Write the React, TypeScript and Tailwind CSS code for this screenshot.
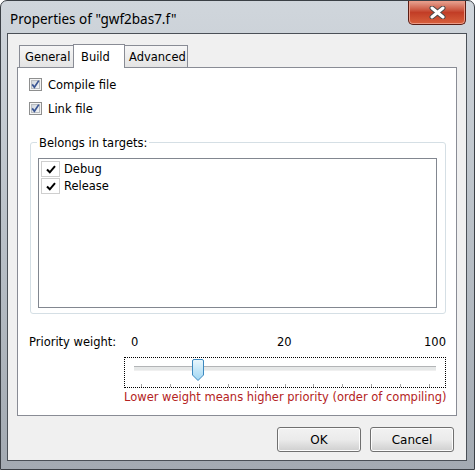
import React from "react";

const ui = { fontFamily: '"DejaVu Sans", Verdana, sans-serif' };
const title = { fontFamily: '"Noto Sans", "Open Sans", sans-serif' };

function CheckBox() {
  return (
    <svg width="13" height="13" viewBox="0 0 13 13" className="shrink-0">
      <defs>
        <linearGradient id="cbg" x1="0" y1="0" x2="1" y2="1">
          <stop offset="0" stopColor="#cdd3da" />
          <stop offset="1" stopColor="#f7f8f9" />
        </linearGradient>
      </defs>
      <rect x="0.5" y="0.5" width="12" height="12" fill="#f4f4f4" stroke="#8e8f8f" />
      <rect x="2.5" y="2.5" width="8" height="8" fill="url(#cbg)" stroke="#b9bdc2" />
      <path d="M3.2 6.4 L5.4 9.2 L9.8 2.6" fill="none" stroke="#3a5593" strokeWidth="1.7" />
    </svg>
  );
}

function ListCheck() {
  return (
    <div className="w-[19px] h-[16px] border border-[#cfcfcf] bg-white flex items-center justify-center shrink-0">
      <svg width="10" height="9" viewBox="0 0 10 9">
        <path d="M1 4.5 L3.8 7.3 L9 1.2" fill="none" stroke="#000" strokeWidth="2" />
      </svg>
    </div>
  );
}

function Slider() {
  const ticks = [16, 45, 74, 103, 132, 160, 188, 217, 246, 275, 304];
  return (
    <div className="w-[322px] h-[31px] border border-dotted border-black">
      <svg width="320" height="29" viewBox="0 0 320 29">
        <defs>
          <linearGradient id="thumb" x1="0" y1="0" x2="0" y2="1">
            <stop offset="0" stopColor="#eaf7fd" />
            <stop offset="1" stopColor="#9fd6f3" />
          </linearGradient>
        </defs>
        <rect x="9" y="8" width="302" height="5" fill="#e6e8e8" />
        <rect x="9" y="8" width="302" height="1" fill="#b2b4b6" />
        <rect x="9" y="12" width="302" height="1" fill="#f0f0f0" />
        {ticks.map((t) => (
          <rect key={t} x={t} y="26" width="1" height="3" fill="#a6a6a6" />
        ))}
        <path
          d="M67.5 3 Q67.5 1.5 69 1.5 L77 1.5 Q78.5 1.5 78.5 3 L78.5 17 L73 22.5 L67.5 17 Z"
          fill="url(#thumb)"
          stroke="#3c89c0"
        />
      </svg>
    </div>
  );
}

function Button({ children }: { children: React.ReactNode }) {
  return (
    <div className="w-[84px] h-[25px] rounded-[3px] border border-[#707070] bg-gradient-to-b from-[#f2f2f2] via-[#ebebeb] to-[#cfcfcf] shadow-[inset_0_0_0_1px_#fcfcfc] flex items-center justify-center text-[12px] text-black">
      {children}
    </div>
  );
}

export default function App() {
  return (
    <div className="w-[475px] h-[470px] bg-white" style={ui}>
      <div className="w-[475px] h-[470px] rounded-t-[7px] border border-[#3b4046] bg-gradient-to-b from-[#d0d6dc] via-[#b9c0c7] to-[#a3aab2] flex flex-col overflow-hidden">
        {/* title bar */}
        <div className="h-[32px] flex items-start justify-between">
          <div className="pl-[9px] pt-[8px] text-[13.5px] text-black" style={title}>
            Properties of "gwf2bas7.f"
          </div>
          <div className="mr-[8px] w-[58px] h-[24px] rounded-b-[5px] border border-t-0 border-[#5a1d14] bg-gradient-to-b from-[#e6a493] via-[#c23d26] to-[#d8603c] shadow-[inset_0_0_0_1px_#eb9a86] flex items-center justify-center">
            <svg width="17" height="13" viewBox="0 0 17 13">
              <path d="M3 2 L14 11 M14 2 L3 11" stroke="#4a4a4a" strokeWidth="5" strokeLinecap="round" />
              <path d="M3 2 L14 11 M14 2 L3 11" stroke="#ffffff" strokeWidth="3" strokeLinecap="round" />
            </svg>
          </div>
        </div>

        {/* client area */}
        <div className="ml-[6px] w-[460px] h-[428px] border border-[#4a5057] bg-[#f0f0f0] flex flex-col pt-[10px] px-[9px] text-[11.5px] text-black">
          {/* tabs */}
          <div className="h-[23px] flex items-end pl-[2px]">
            <div className="w-[54px] h-[22px] border-l border-t border-[#898c95] bg-gradient-to-b from-[#f6f6f6] to-[#e4e4e4] flex items-center pt-[2px] pl-[5px]">
              General
            </div>
            <div className="relative z-10 w-[52px] h-[24px] -mb-[1px] border-l border-t border-r border-[#898c95] bg-white flex items-start pt-[4px] pl-[7px]">
              Build
            </div>
            <div className="w-[63px] h-[22px] border-t border-r border-[#898c95] bg-gradient-to-b from-[#f6f6f6] to-[#e4e4e4] flex items-center pt-[2px] pl-[4px]">
              Advanced
            </div>
          </div>

          {/* tab panel */}
          <div className="w-[440px] h-[349px] border border-[#898c95] bg-white flex flex-col pt-[10px]">
            <div className="pl-[11px] flex flex-col gap-[11px]">
              <div className="h-[13px] flex items-center gap-[6px]">
                <CheckBox />
                <span className="pt-[2px]">Compile file</span>
              </div>
              <div className="h-[13px] flex items-center gap-[6px]">
                <CheckBox />
                <span className="pt-[2px]">Link file</span>
              </div>
            </div>

            {/* group box */}
            <div className="relative ml-[12px] mt-[27px] w-[416px] h-[172px] border border-[#d5dfe5] rounded-[3px] pl-[7px] pt-[15px]">
              <span className="absolute left-[6px] -top-[7px] bg-white px-[2px] leading-[14px]">
                Belongs in targets:
              </span>
              <div className="w-[399px] h-[150px] border border-[#828790] bg-white pt-[2px] pl-[2px] flex flex-col gap-[1px]">
                <div className="h-[16px] flex items-center gap-[4px]">
                  <ListCheck />
                  <span className="pt-[2px]">Debug</span>
                </div>
                <div className="h-[16px] flex items-center gap-[4px]">
                  <ListCheck />
                  <span className="pt-[2px]">Release</span>
                </div>
              </div>
            </div>

            {/* priority */}
            <div className="mt-[21px] pl-[11px] flex leading-[14px]">
              <span className="w-[95px]">Priority weight:</span>
              <div className="w-[322px] flex">
                <span className="w-[153px] pl-[7px]">0</span>
                <span>20</span>
                <span className="flex-1 text-right">100</span>
              </div>
            </div>
            <div className="ml-[106px] mt-[8px]">
              <Slider />
            </div>
            <div className="ml-[106px] mt-[2px] leading-[15px] text-[#b42323]">
              Lower weight means higher priority (order of compiling)
            </div>
          </div>

          {/* buttons */}
          <div className="mt-[11px] flex justify-end gap-[9px] pr-[3px]">
            <Button>OK</Button>
            <Button>Cancel</Button>
          </div>
        </div>
      </div>
    </div>
  );
}
